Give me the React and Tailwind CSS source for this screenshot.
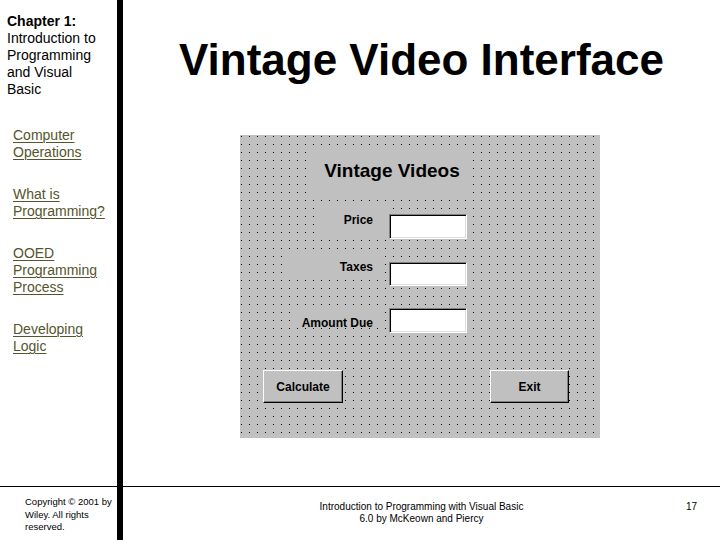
import React from 'react';

const links = [
  ['Computer', 'Operations'],
  ['What is', 'Programming?'],
  ['OOED', 'Programming', 'Process'],
  ['Developing', 'Logic'],
];

const TextBox = ({ className = '' }) => (
  <div
    className={`w-[78px] bg-white border border-t-[#808080] border-l-[#808080] border-r-white border-b-white shadow-[inset_1px_1px_0_#000,inset_-1px_-1px_0_#dfdfdf] ${className}`}
  />
);

const VbButton = ({ label, className = '' }) => (
  <div
    className={`h-[33px] flex items-center justify-center bg-[#c0c0c0] border border-t-white border-l-white border-r-black border-b-black shadow-[inset_-1px_-1px_0_#808080] text-[12px] font-bold text-black ${className}`}
  >
    {label}
  </div>
);

const App = () => {
  return (
    <div className="w-[720px] h-[540px] bg-white flex flex-col overflow-hidden font-['Liberation_Sans',Arial,sans-serif] text-black">
      {/* Slide body */}
      <div className="h-[486px] flex">
        {/* Left outline */}
        <div className="w-[117px] shrink-0 pt-[13px]">
          <div className="pl-[7px] text-[14px] leading-[17px]">
            <div className="font-bold">Chapter 1:</div>
            <div>Introduction to</div>
            <div>Programming</div>
            <div>and Visual</div>
            <div>Basic</div>
          </div>
          <div className="pl-[13px] mt-[29px] flex flex-col gap-[25px] text-[14px] leading-[17px] text-[#55552b]">
            {links.map((group, i) => (
              <a key={i} href="#" className="underline decoration-1 underline-offset-2 block">
                {group.map((line) => (
                  <div key={line}>{line}</div>
                ))}
              </a>
            ))}
          </div>
        </div>
        <div className="w-[6px] shrink-0 bg-black" />

        {/* Main content */}
        <div className="flex-1 flex flex-col items-center">
          <h1 className="pt-[35px] h-[85px] text-[44px] leading-[50px] font-bold whitespace-nowrap">
            Vintage Video Interface
          </h1>

          {/* VB form designer */}
          <div className="mt-[50px] mr-[3px] w-[360px] h-[303px] bg-[#c0c0c0] bg-[conic-gradient(from_270deg_at_1px_1px,#000_90deg,transparent_0)] bg-[length:8px_8px] bg-[position:1px_1px] flex flex-col">
            <div className="mt-[15px] ml-[72px] w-[160px] h-[43px] bg-[#c0c0c0] flex items-center justify-center text-[19px] font-bold">
              Vintage Videos
            </div>

            <div className="mt-[12px] flex items-start">
              <div className="ml-[78px] w-[69px] h-[30px] bg-[#c0c0c0] flex items-center justify-end pr-[14px] text-[12px] font-bold">
                Price
              </div>
              <TextBox className="ml-[2px] mt-[9px] h-[25px]" />
            </div>

            <div className="mt-[11px] flex items-start">
              <div className="ml-[48px] w-[95px] h-[28px] bg-[#c0c0c0] flex justify-end pt-[10px] pr-[10px] text-[12px] leading-[14px] font-bold">
                Taxes
              </div>
              <TextBox className="ml-[6px] mt-[12px] h-[24px]" />
            </div>

            <div className="mt-[22px] flex items-start">
              <div className="ml-[50px] mt-[4px] w-[93px] h-[15px] overflow-hidden bg-[#c0c0c0] flex justify-end pt-[4px] pr-[10px] text-[12px] leading-[14px] font-bold whitespace-nowrap">
                Amount Due
              </div>
              <TextBox className="ml-[6px] h-[25px]" />
            </div>

            <div className="mt-[37px] flex">
              <VbButton label="Calculate" className="ml-[23px] w-[80px]" />
              <VbButton label="Exit" className="ml-[147px] w-[79px]" />
            </div>
          </div>
        </div>
      </div>

      <div className="h-px bg-black" />

      {/* Footer */}
      <div className="flex-1 flex">
        <div className="w-[117px] shrink-0 pl-[25px] pt-[9px] text-[9.5px] leading-[12.5px]">
          <div>Copyright © 2001 by</div>
          <div>Wiley. All rights</div>
          <div>reserved.</div>
        </div>
        <div className="w-[6px] shrink-0 bg-black" />
        <div className="flex-1 grid grid-cols-[1fr_auto_1fr] pt-[14px] text-[10px] leading-[12px]">
          <div />
          <div className="text-center">
            <div>Introduction to Programming with Visual Basic</div>
            <div>6.0 by McKeown and Piercy</div>
          </div>
          <div className="flex justify-end pr-[23px]">17</div>
        </div>
      </div>
    </div>
  );
};

export default App;
